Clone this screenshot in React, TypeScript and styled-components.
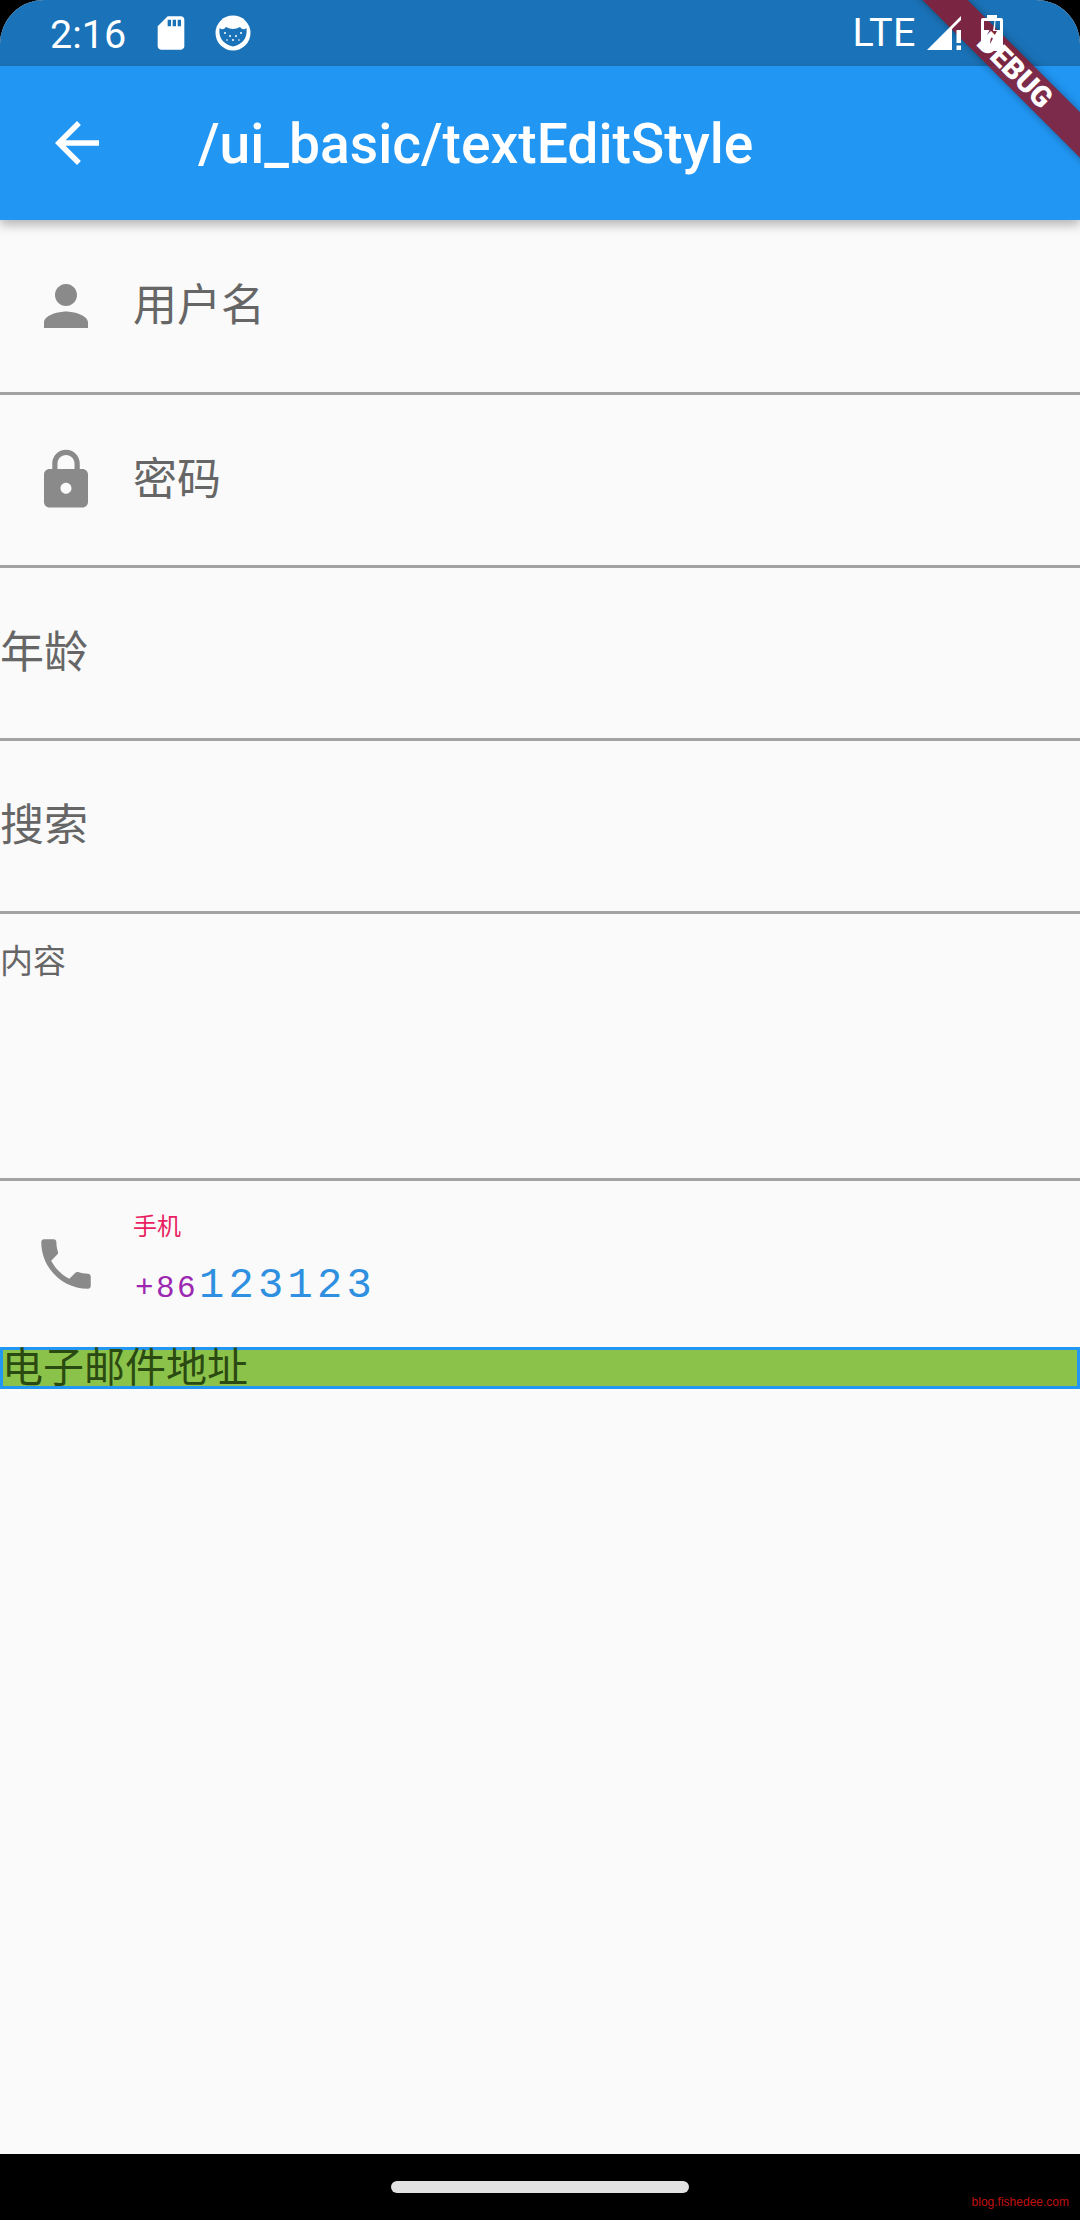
import React from "react";
import styled, { createGlobalStyle } from "styled-components";
import { MdArrowBack, MdLock, MdPerson, MdPhone, MdSdCard } from "react-icons/md";

const Global = createGlobalStyle`
  html, body { margin: 0; padding: 0; background: #000; }
  * { box-sizing: border-box; }
`;

const Page = styled.div`
  width: 1080px;
  height: 2220px;
  background: #000;
  display: flex;
  flex-direction: column;
  font-family: "Noto Sans CJK SC", "Noto Sans", sans-serif;
`;

const Screen = styled.div`
  position: relative;
  height: 2154px;
  background: #fafafa;
  border-radius: 44px 44px 0 0;
  overflow: hidden;
  display: flex;
  flex-direction: column;
`;

const StatusBar = styled.div`
  height: 66px;
  flex: none;
  background: #1a73b8;
  color: #fff;
  display: flex;
  align-items: center;
  padding-left: 50px;
  font-family: Roboto, sans-serif;
  font-size: 39.5px;
  position: relative;
`;

const Clock = styled.span`
  width: 101px;
  line-height: 66px;
  padding-top: 3px;
`;

const SdIcon = styled(MdSdCard)`
  flex: none;
  margin-right: 24px;
`;

const Spacer = styled.div`
  flex: 1;
`;

const Network = styled.span`
  line-height: 66px;
  margin-right: 11px;
  letter-spacing: 0.5px;
`;

const SignalGlyph = styled.svg`
  flex: none;
  margin-right: 19px;
  position: relative;
  z-index: 4;
`;

const BatteryGlyph = styled.svg`
  flex: none;
  margin-right: 77px;
  position: relative;
  z-index: 4;
`;

const AppBar = styled.header`
  height: 154px;
  flex: none;
  background: #2196f3;
  color: #fff;
  display: flex;
  align-items: center;
  padding-left: 44px;
  box-shadow: 0 5px 10px rgba(0, 0, 0, 0.28);
  position: relative;
  z-index: 1;
`;

const BackIcon = styled(MdArrowBack)`
  flex: none;
  margin-right: 88px;
`;

const Title = styled.h1`
  margin: 2px 0 0;
  font-family: Roboto, sans-serif;
  font-weight: 500;
  font-size: 55.2px;
  line-height: 62px;
`;

const Row = styled.div<{ $height: number }>`
  height: ${(p) => p.$height}px;
  flex: none;
  border-bottom: 3px solid #a2a2a2;
  display: flex;
  align-items: center;
  color: #666;
`;

const LeadIcon = styled.div`
  width: 66px;
  height: 66px;
  flex: none;
  margin: 0 34px 0 33px;
  color: #8a8a8a;
  display: flex;
`;

const Label = styled.span`
  font-size: 44px;
  line-height: 50px;
  margin-bottom: 8px;
`;

const TopRow = styled(Row)`
  align-items: flex-start;
  padding-top: 25px;
`;

const SmallLabel = styled.span`
  font-size: 33px;
  line-height: 40px;
`;

const PhoneRow = styled.div`
  height: 166px;
  flex: none;
  display: flex;
  align-items: center;
`;

const PhoneField = styled.div`
  display: flex;
  flex-direction: column;
  margin-top: -6px;
`;

const FloatLabel = styled.span`
  color: #e91e63;
  font-size: 24px;
  line-height: 32px;
`;

const PhoneValue = styled.div`
  display: flex;
  align-items: baseline;
  margin-top: 20px;
  font-family: "Liberation Mono", monospace;
  line-height: 50px;
`;

const Prefix = styled.span`
  color: #9c27b0;
  font-size: 31px;
  letter-spacing: 2.4px;
  margin-left: 2px;
  margin-right: 1px;
`;

const Digits = styled.span`
  color: #2f8fe0;
  font-size: 42px;
  letter-spacing: 4.3px;
`;

const EmailBox = styled.div`
  height: 42px;
  flex: none;
  background: #8bc34a;
  border: 3px solid #2196f3;
  color: #2b4a12;
  font-size: 41px;
  line-height: 28px;
  text-indent: -1px;
  white-space: nowrap;
`;

const DebugBanner = styled.div`
  position: absolute;
  left: 863px;
  top: 52px;
  width: 300px;
  height: 32px;
  transform: rotate(45deg);
  background: rgba(140, 25, 45, 0.85);
  box-shadow: 0 0 8px rgba(0, 0, 0, 0.35);
  color: #fff;
  font-family: Roboto, sans-serif;
  font-weight: 900;
  font-size: 29px;
  line-height: 32px;
  text-align: center;
  text-indent: 6px;
  z-index: 3;
`;

const NavBar = styled.footer`
  position: relative;
  flex: 1;
  display: flex;
  justify-content: center;
  padding-top: 27px;
`;

const Handle = styled.div`
  width: 298px;
  height: 12px;
  border-radius: 6px;
  background: #e2e2e2;
`;

const Watermark = styled.span`
  position: absolute;
  right: 11px;
  bottom: 10px;
  color: #c01010;
  font-family: "Liberation Sans", sans-serif;
  font-size: 12px;
  line-height: 16px;
`;

const CatIcon = () => (
  <svg width="36" height="36" viewBox="0 0 36 36" style={{ flex: "none" }}>
    <circle cx="18" cy="18" r="17.5" fill="#fff" />
    <path d="M4.5 13 Q8 16 11 12 Q18 16 25 12 Q28 16 31.5 13 Q33 28 18 31.5 Q3 28 4.5 13Z" fill="#1a73b8" />
    <circle cx="10" cy="18" r="1" fill="#fff" />
    <circle cx="26" cy="18" r="1" fill="#fff" />
    <circle cx="15" cy="21" r="1" fill="#fff" />
    <circle cx="21" cy="21" r="1" fill="#fff" />
    <circle cx="18" cy="25" r="1" fill="#fff" />
    <circle cx="12" cy="25" r="0.8" fill="#fff" />
    <circle cx="24" cy="25" r="0.8" fill="#fff" />
  </svg>
);

export default function App() {
  return (
    <Page>
      <Global />
      <Screen>
        <StatusBar>
          <Clock>2:16</Clock>
          <SdIcon size={40} />
          <CatIcon />
          <Spacer />
          <Network>LTE</Network>
          <SignalGlyph width="35" height="34" viewBox="0 0 35 34">
            <path d="M0 34 L25 9 V34Z" fill="#fff" />
            <path d="M25 9 L34 0 V4 L25 13Z" fill="#fff" />
            <rect x="29.5" y="14" width="4.5" height="13" fill="#fff" />
            <rect x="29.5" y="29.5" width="4.5" height="4.5" fill="#fff" />
          </SignalGlyph>
          <BatteryGlyph width="22" height="36" viewBox="0 0 22 36">
            <path
              fillRule="evenodd"
              d="M6 0 H16 V3 H20 Q22 3 22 5 V34 Q22 36 20 36 H2 Q0 36 0 34 V5 Q0 3 2 3 H6Z M3 6 V15 H8.5 L6 20 H10 L9 29 L16 16 H12 L13.5 6Z M14.5 6 L14 15 H19 V6Z"
              fill="#fff"
            />
          </BatteryGlyph>
        </StatusBar>
        <AppBar>
          <BackIcon size={66} />
          <Title>/ui_basic/textEditStyle</Title>
        </AppBar>
        <Row $height={175}>
          <LeadIcon><MdPerson size={66} /></LeadIcon>
          <Label>用户名</Label>
        </Row>
        <Row $height={173}>
          <LeadIcon><MdLock size={66} /></LeadIcon>
          <Label>密码</Label>
        </Row>
        <Row $height={173}>
          <Label>年龄</Label>
        </Row>
        <Row $height={173}>
          <Label>搜索</Label>
        </Row>
        <TopRow $height={267}>
          <SmallLabel>内容</SmallLabel>
        </TopRow>
        <PhoneRow>
          <LeadIcon><MdPhone size={66} /></LeadIcon>
          <PhoneField>
            <FloatLabel>手机</FloatLabel>
            <PhoneValue>
              <Prefix>+86</Prefix>
              <Digits>123123</Digits>
            </PhoneValue>
          </PhoneField>
        </PhoneRow>
        <EmailBox>电子邮件地址</EmailBox>
        <DebugBanner>DEBUG</DebugBanner>
      </Screen>
      <NavBar>
        <Handle />
        <Watermark>blog.fishedee.com</Watermark>
      </NavBar>
    </Page>
  );
}
